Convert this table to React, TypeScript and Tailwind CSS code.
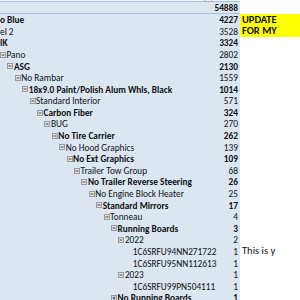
import React from "react";

type Row = {
  label: string;
  level: number;
  value: number;
  bold?: boolean;
  leaf?: boolean;
  collapsed?: boolean;
  note?: string;
  noteBg?: boolean;
};

const ROWS: Row[] = [
  { label: "o Blue", level: 0, value: 4227, bold: true, note: "UPDATE", noteBg: true },
  { label: "el 2", level: 1, value: 3528, note: "FOR MY", noteBg: true },
  { label: "IK", level: 2, value: 3324, bold: true },
  { label: "Pano", level: 3, value: 2802 },
  { label: "ASG", level: 4, value: 2130, bold: true },
  { label: "No Rambar", level: 5, value: 1559 },
  { label: "18x9.0 Paint/Polish Alum Whls, Black", level: 6, value: 1014, bold: true },
  { label: "Standard Interior", level: 7, value: 571 },
  { label: "Carbon Fiber", level: 8, value: 324, bold: true },
  { label: "BUG", level: 9, value: 270 },
  { label: "No Tire Carrier", level: 10, value: 262, bold: true },
  { label: "No Hood Graphics", level: 11, value: 139 },
  { label: "No Ext Graphics", level: 12, value: 109, bold: true },
  { label: "Trailer Tow Group", level: 13, value: 68 },
  { label: "No Trailer Reverse Steering", level: 14, value: 26, bold: true },
  { label: "No Engine Block Heater", level: 15, value: 25 },
  { label: "Standard Mirrors", level: 16, value: 17, bold: true },
  { label: "Tonneau", level: 17, value: 4 },
  { label: "Running Boards", level: 18, value: 3, bold: true },
  { label: "2022", level: 19, value: 2 },
  { label: "1C6SRFU94NN271722", level: 20, value: 1, leaf: true, note: "This is y" },
  { label: "1C6SRFU95NN112613", level: 20, value: 1, leaf: true },
  { label: "2023", level: 19, value: 1 },
  { label: "1C6SRFU99PN504111", level: 20, value: 1, leaf: true },
  { label: "No Running Boards", level: 18, value: 1, bold: true, collapsed: true },
];

// Little Excel expand/collapse box
function Toggle({ collapsed }: { collapsed?: boolean }) {
  return (
    <svg width="6" height="6" viewBox="0 0 6 6" className="shrink-0 mr-[0.5px]">
      <rect x="0.5" y="0.5" width="5" height="5" fill="none" stroke="#9a9a9a" strokeWidth="1" />
      <line x1="1.5" y1="3" x2="4.5" y2="3" stroke="#444" strokeWidth="1" />
      {collapsed && <line x1="3" y1="1.5" x2="3" y2="4.5" stroke="#444" strokeWidth="1" />}
    </svg>
  );
}

export default function App() {
  return (
    <div className="w-[300px] h-[300px] overflow-hidden bg-white text-[9.3px] text-[#111] font-['Carlito','Lato',sans-serif] leading-none">
      {/* Header / grand total */}
      <div className="flex h-[14px]">
        <div className="relative w-[240px] flex flex-col">
          <div className="h-[1px] bg-[#eef3f9]" />
          <div className="flex flex-1 items-center justify-end pr-[2px] bg-[#dce6f1] border-t border-b border-[#a9c0de] font-bold">
            54888
          </div>
          <div className="absolute left-[204px] top-0 w-[8px] h-[2px] border border-t-0 border-[#b0b0b0] bg-[#f2f2f2]" />
        </div>
        <div className="flex-1" />
      </div>

      {ROWS.map((r, i) => {
        const boxX = (r.level - 3) * 7.4;
        const left = r.level < 3 ? 0 : r.leaf ? boxX + 7 : boxX;
        return (
          <div key={i} className="flex h-[11.6px]">
            <div className="flex w-[240px] items-center bg-[#dce6f1]">
              <div className="flex flex-1 min-w-0 items-center whitespace-nowrap" style={{ paddingLeft: left }}>
                {r.level >= 3 && !r.leaf && <Toggle collapsed={r.collapsed} />}
                <span className={r.bold ? "font-bold" : ""}>{r.label}</span>
              </div>
              <div className={`w-[28px] text-right pr-[2px] ${r.bold ? "font-bold" : ""}`}>{r.value}</div>
            </div>
            <div
              className={`flex flex-1 items-center pl-[2px] whitespace-nowrap text-[10.5px] ${
                r.noteBg ? "bg-[#ffff00] font-bold" : ""
              }`}
            >
              {r.note}
            </div>
          </div>
        );
      })}
    </div>
  );
}
